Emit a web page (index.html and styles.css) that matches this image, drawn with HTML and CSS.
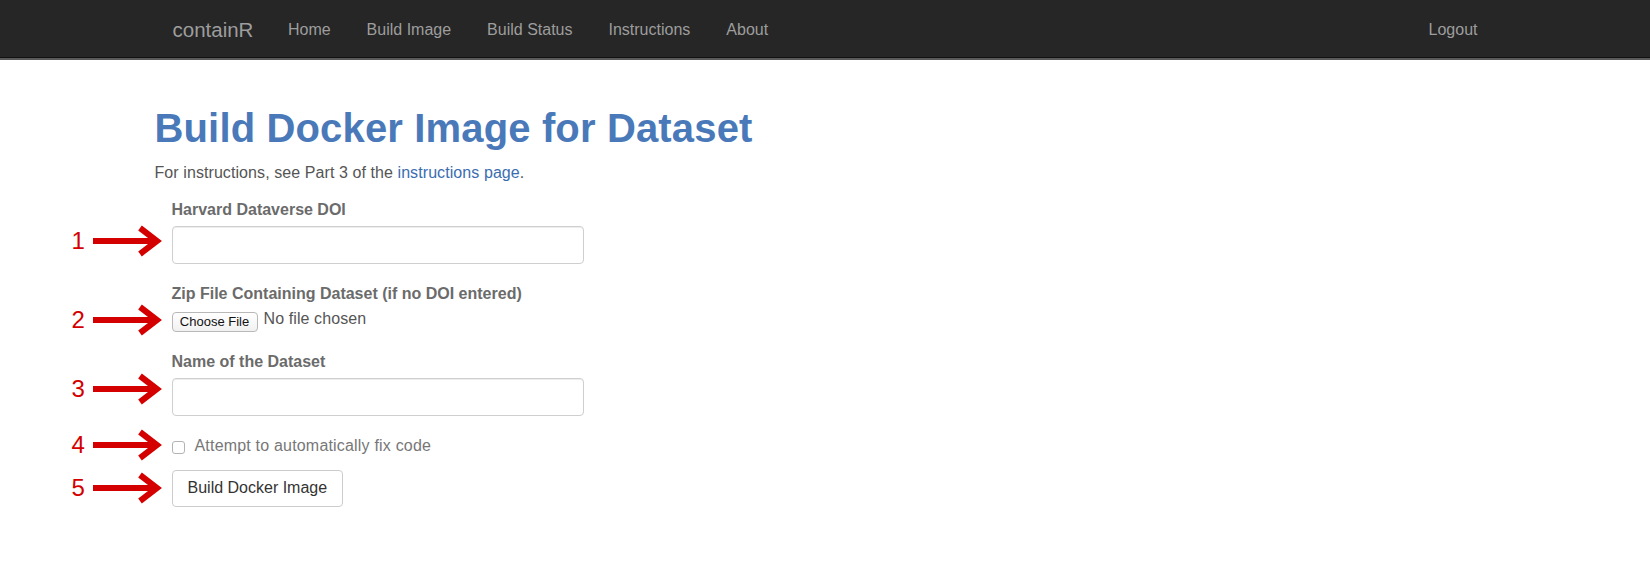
FILE: index.html
```html
<!DOCTYPE html>
<html lang="en">
<head>
<meta charset="utf-8">
<title>containR - Build Image</title>
<link rel="stylesheet" href="styles.css">
</head>
<body>
<nav class="navbar">
  <div class="container nav-inner">
    <a class="brand" href="#">containR</a>
    <ul class="nav-links">
      <li><a href="#">Home</a></li>
      <li><a href="#">Build Image</a></li>
      <li><a href="#">Build Status</a></li>
      <li><a href="#">Instructions</a></li>
      <li><a href="#">About</a></li>
    </ul>
    <ul class="nav-links nav-right">
      <li><a href="#">Logout</a></li>
    </ul>
  </div>
</nav>

<main class="container page">
  <h1 class="title">Build Docker Image for Dataset</h1>
  <p class="intro">For instructions, see Part 3 of the <a href="#">instructions page</a>.</p>

  <form class="build-form">
    <div class="form-group">
      <label class="field-label">Harvard Dataverse DOI</label>
      <div class="field">
        <input class="text-input" type="text">
        <span class="callout callout-1"><span class="callout-num">1</span><svg class="arrow" viewBox="0 0 69 34" width="69" height="34"><path d="M0 14H62V20H0Z" fill="#d40000"/><polyline points="47,4 64,17 47,30" fill="none" stroke="#d40000" stroke-width="6" stroke-linejoin="miter"/></svg></span>
      </div>
    </div>

    <div class="form-group">
      <label class="field-label">Zip File Containing Dataset (if no DOI entered)</label>
      <div class="field file-row">
        <span class="file-btn">Choose File</span>
        <span class="file-name">No file chosen</span>
        <span class="callout callout-2"><span class="callout-num">2</span><svg class="arrow" viewBox="0 0 69 34" width="69" height="34"><path d="M0 14H62V20H0Z" fill="#d40000"/><polyline points="47,4 64,17 47,30" fill="none" stroke="#d40000" stroke-width="6" stroke-linejoin="miter"/></svg></span>
      </div>
    </div>

    <div class="form-group">
      <label class="field-label">Name of the Dataset</label>
      <div class="field">
        <input class="text-input" type="text">
        <span class="callout callout-3"><span class="callout-num">3</span><svg class="arrow" viewBox="0 0 69 34" width="69" height="34"><path d="M0 14H62V20H0Z" fill="#d40000"/><polyline points="47,4 64,17 47,30" fill="none" stroke="#d40000" stroke-width="6" stroke-linejoin="miter"/></svg></span>
      </div>
    </div>

    <div class="field check-row">
      <input class="check-box" type="checkbox">
      <span class="check-text">Attempt to automatically fix code</span>
      <span class="callout callout-4"><span class="callout-num">4</span><svg class="arrow" viewBox="0 0 69 34" width="69" height="34"><path d="M0 14H62V20H0Z" fill="#d40000"/><polyline points="47,4 64,17 47,30" fill="none" stroke="#d40000" stroke-width="6" stroke-linejoin="miter"/></svg></span>
    </div>

    <div class="field submit-row">
      <button class="build-btn" type="button">Build Docker Image</button>
      <span class="callout callout-5"><span class="callout-num">5</span><svg class="arrow" viewBox="0 0 69 34" width="69" height="34"><path d="M0 14H62V20H0Z" fill="#d40000"/><polyline points="47,4 64,17 47,30" fill="none" stroke="#d40000" stroke-width="6" stroke-linejoin="miter"/></svg></span>
    </div>
  </form>
</main>
</body>
</html>
```

FILE: styles.css
```css
html, body {
  margin: 0;
  padding: 0;
  background: #fff;
}

body {
  font-family: "Liberation Sans", Arial, Helvetica, sans-serif;
  font-size: 16px;
  line-height: 22px;
  color: #333;
}

.container {
  width: 1341px;
  margin: 0 auto;
}

/* ---------- Navbar ---------- */
.navbar {
  height: 57px;
  background: #262626;
  border-bottom: 1px solid #111;
  box-shadow: 0 2px 0 #5a5a5a;
}

.nav-inner {
  display: flex;
  align-items: center;
  height: 57px;
  padding-top: 3px;
  box-sizing: border-box;
}

.brand {
  font-size: 20.5px;
  line-height: 22px;
  padding: 0 16.5px 0 18px;
  color: #9d9d9d;
  text-decoration: none;
}

.nav-links {
  display: flex;
  list-style: none;
  margin: 0;
  padding: 0;
}

.nav-links a {
  display: block;
  padding: 0 18px;
  line-height: 22px;
  color: #9d9d9d;
  text-decoration: none;
}

.nav-right {
  margin-left: auto;
}

/* ---------- Page ---------- */
.page {
  padding-top: 48px;
}

.title {
  margin: 0;
  font-size: 40px;
  line-height: 44px;
  font-weight: 700;
  letter-spacing: 0.15px;
  color: #4a79b9;
}

.intro {
  margin: 12px 0 0;
  color: #555;
  letter-spacing: 0.08px;
}

.intro a {
  color: #3a6db0;
  text-decoration: none;
}

/* ---------- Form ---------- */
.build-form {
  margin: 15px 0 0 17px;
}

.form-group {
  margin-bottom: 19px;
}

.field-label {
  display: block;
  font-weight: 700;
  color: #6b6b6b;
  margin-bottom: 4.5px;
}

.field {
  position: relative;
}

.text-input {
  display: block;
  width: 412px;
  height: 38px;
  box-sizing: border-box;
  margin: 0;
  padding: 6px 12px;
  border: 1px solid #cfcfcf;
  border-radius: 4px;
  background: #fff;
  box-shadow: inset 0 1px 1px rgba(0, 0, 0, 0.075);
  font: inherit;
}

.file-row {
  display: flex;
  align-items: flex-start;
}

.file-btn {
  margin-top: 3px;
  width: 86px;
  height: 20px;
  box-sizing: border-box;
  border: 1px solid #b8b8b8;
  border-radius: 4px;
  background: linear-gradient(#ffffff, #f1f1f1);
  font-size: 13px;
  line-height: 18px;
  text-align: center;
  color: #111;
}

.file-name {
  margin: -1px 0 0 6px;
  color: #555;
  letter-spacing: 0.1px;
}

.check-row {
  display: flex;
  align-items: flex-start;
  margin-bottom: 13px;
}

.check-box {
  appearance: none;
  -webkit-appearance: none;
  width: 13px;
  height: 13px;
  box-sizing: border-box;
  margin: 6px 10px 0 0;
  border: 1px solid #b3b3b3;
  border-radius: 3px;
  background: #fff;
}

.check-text {
  color: #777;
  letter-spacing: 0.19px;
}

.submit-row {
  display: flex;
}

.build-btn {
  margin: 0;
  padding: 6.5px 15px;
  font: inherit;
  line-height: 22px;
  color: #333;
  background: #fff;
  border: 1px solid #ccc;
  border-radius: 4px;
}

/* ---------- Callout annotations ---------- */
.callout {
  position: absolute;
  left: -100px;
  display: flex;
  align-items: center;
  gap: 8px;
  height: 34px;
}

.callout-num {
  font-size: 24px;
  line-height: 34px;
  color: #d40000;
}

.arrow {
  display: block;
}

.callout-1 { top: -1.5px; }
.callout-2 { top: -6px; }
.callout-3 { top: -5.5px; }
.callout-4 { top: -6.5px; }
.callout-5 { top: 1.5px; }
```
